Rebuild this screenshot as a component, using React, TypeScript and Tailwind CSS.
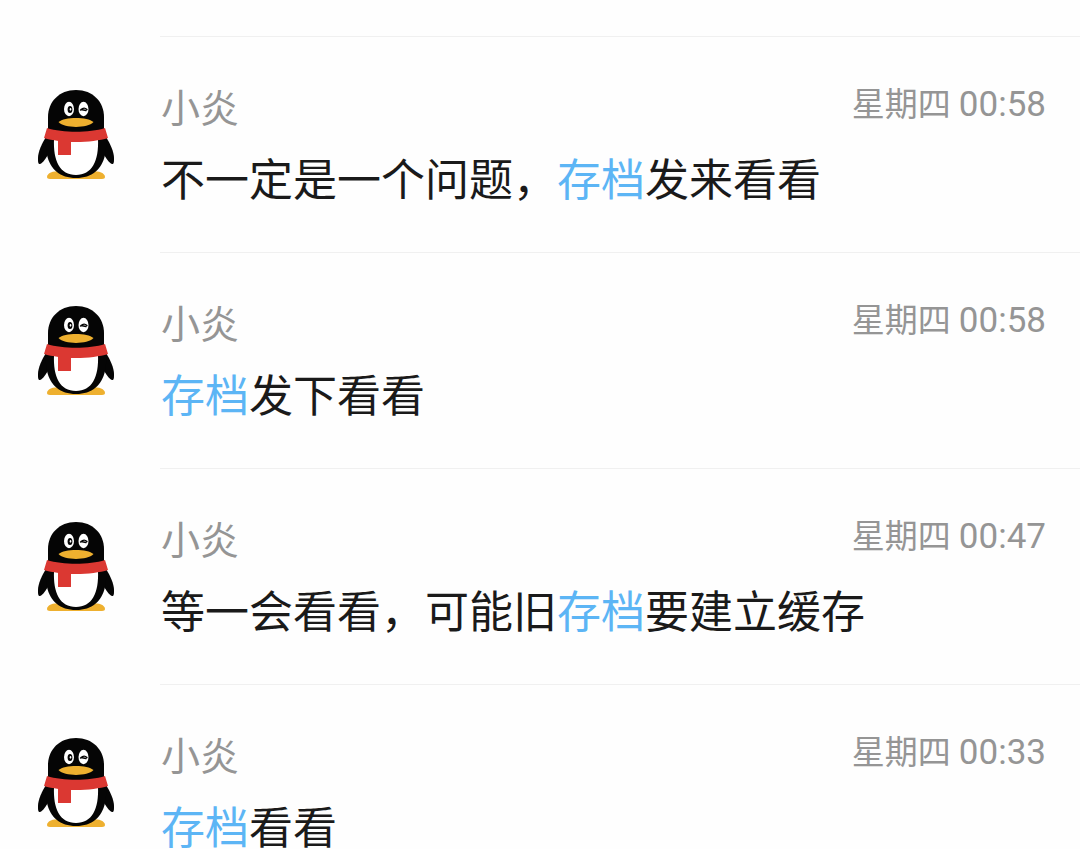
interface Message {
  id: number;
  sender: string;
  day: string;
  time: string;
  text: string;
}

const KEYWORD = '存档';

const messages: Message[] = [
  { id: 1, sender: '小炎', day: '星期四', time: '00:58', text: '不一定是一个问题，存档发来看看' },
  { id: 2, sender: '小炎', day: '星期四', time: '00:58', text: '存档发下看看' },
  { id: 3, sender: '小炎', day: '星期四', time: '00:47', text: '等一会看看，可能旧存档要建立缓存' },
  { id: 4, sender: '小炎', day: '星期四', time: '00:33', text: '存档看看' },
];

function PenguinAvatar() {
  return (
    <svg viewBox="0 0 80 96" className="h-24 w-20 shrink-0" role="img" aria-label="头像">
      {/* feet */}
      <path d="M11 90c0-4 6-6 13-6h32c7 0 13 2 13 6 0 1-1 2-3 2H14c-2 0-3-1-3-2z" fill="#eeb02f" />
      {/* wings */}
      <path d="M10 50C6 56 2 65 2 71c0 4 0 6 2 6 3-1 6-6 9-11l5-16z" fill="#050505" />
      <path d="M70 50c4 6 8 15 8 21 0 4 0 6-2 6-3-1-6-6-9-11l-5-16z" fill="#050505" />
      {/* body and head */}
      <path d="M10 50c-1 5 0 12 1 18 3 14 13 23 29 23s26-9 29-23c1-6 2-13 1-18l-8-8H18z" fill="#050505" />
      <path d="M40 3C23 3 12 15 12 30v14h56V30C68 15 57 3 40 3z" fill="#050505" />
      <path d="M18 52c-1 22 6 36 22 36s23-14 22-36c-12 3-32 3-44 0z" fill="#fff" />
      {/* scarf */}
      <path d="M11 41c16 5 42 5 58 0l3 10c-8 2.500-20 4-32 4s-24-1.500-32-4z" fill="#db3832" />
      <path d="M22 53h13v14c0 1 0 1-1 1H23c-1 0-1 0-1-1z" fill="#db3832" />
      {/* eyes */}
      <ellipse cx="33" cy="22" rx="5" ry="7.200" fill="#fff" />
      <ellipse cx="47.500" cy="22" rx="5" ry="7.200" fill="#fff" />
      <ellipse cx="34" cy="22.500" rx="2.400" ry="3.600" fill="#050505" />
      <ellipse cx="34.500" cy="22.300" rx="0.800" ry="1.400" fill="#fff" />
      <path d="M44.500 23q3.500-3.500 6.500-.5M45 22.500l5 1" fill="none" stroke="#050505" strokeWidth="1.300" strokeLinecap="round" />
      {/* beak */}
      <path d="M22.500 35c6-5.500 29-5.500 35 0-6 6.500-29 6.500-35 0z" fill="#eeb02f" />
    </svg>
  );
}

function HighlightedText({ text }: { text: string }) {
  const [before, ...rest] = text.split(KEYWORD);
  return (
    <p className="text-[44px] leading-10 text-[#1a1a1a]">
      {before}
      {rest.map((part, i) => (
        <span key={i}>
          <span className="text-[#5cb5f5]">{KEYWORD}</span>
          {part}
        </span>
      ))}
    </p>
  );
}

function MessageRow({ message }: { message: Message }) {
  return (
    <li className="group flex gap-11 pl-9">
      <div className="h-36 pt-[51px] group-last:h-auto">
        <PenguinAvatar />
      </div>
      <div className="min-w-0 flex-1 border-t border-[#f0f0f0] pt-12 pb-[51px] pl-px group-last:pb-0">
        <div className="flex items-start justify-between pr-[34px]">
          <h2 className="pt-1 text-[39px] leading-10 text-[#959595]">{message.sender}</h2>
          <time className="text-[33px] leading-10 text-[#959595]">
            {message.day} <span className="text-[35px]">{message.time}</span>
          </time>
        </div>
        <div className="pt-8">
          <HighlightedText text={message.text} />
        </div>
      </div>
    </li>
  );
}

export default function App() {
  return (
    <main className="h-screen overflow-hidden bg-[#fefefe] pt-9 font-[Roboto,'Noto_Sans_CJK_SC',sans-serif]">
      <ul>
        {messages.map((message) => (
          <MessageRow key={message.id} message={message} />
        ))}
      </ul>
    </main>
  );
}
